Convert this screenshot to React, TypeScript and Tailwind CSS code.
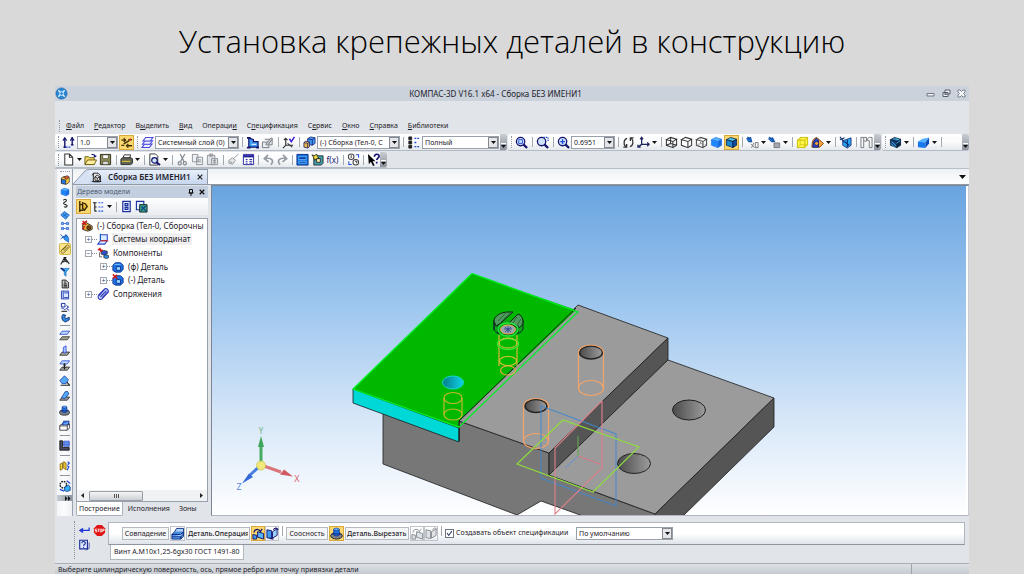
import type { ReactNode } from "react";

const NAVY = "#14146e";
const BLUE = "#1f4fd8";
const SKY = "#3f9cf0";

const cube = (top: string, left: string, right: string, edge: string) => (
  <g stroke={edge} strokeWidth=".8" strokeLinejoin="round">
    <path d="M1.500 4 6 1.500 12.500 3.500 8.500 6z" fill={top} />
    <path d="M1.500 4 8.500 6V12.500L1.500 10z" fill={left} />
    <path d="M8.500 6 12.500 3.500V10L8.500 12.500z" fill={right} />
  </g>
);

const magnifier = (inner: ReactNode) => (
  <g fill="none" stroke={NAVY} strokeWidth="1.400">
    <circle cx="6" cy="6" r="4.500" fill="#cfe2fb" />
    <path d="M9 9l4 4" strokeWidth="2.400" />
    {inner}
  </g>
);

const icons: Record<string, ReactNode> = {
  step: (
    <g fill="none" stroke={NAVY} strokeWidth="1.500">
      <path d="M3 3v10M11 1v9" />
      <path d="M1 5l2-3 2 3M9 5l2-3 2 3M1.500 12h3M9.500 9.500h3" strokeWidth="1.200" />
      <path d="M4 12h6" stroke={BLUE} strokeDasharray="2 1" />
    </g>
  ),
  snap: (
    <g fill="none" stroke="#3d2c00" strokeWidth="1.400">
      <path d="M1.500 4.500h4M9 4h4M1.500 10h3M8 10.500h5M4 8.500 10 5" />
      <path d="M4 2.500l2 2-2 2M9 8.500l-2 2 2 2" />
      <circle cx="11" cy="4" r="1.200" fill="#c22" stroke="none" />
    </g>
  ),
  layers: (
    <g fill="#eef1ff" stroke="#4b49e0" strokeWidth="1.100">
      <path d="M1 12.500l3-4h8l-3 4z" />
      <path d="M1.500 9l3-4h8l-3 4z" />
      <path d="M2 5.500l3-4h8l-3 4z" />
    </g>
  ),
  place: (
    <g>
      <path d="M3 2v10h10V6H8V4z" fill={SKY} stroke={NAVY} strokeWidth="1.300" />
      <path d="M1 2h4M1 12.500h4M11 12.500h3" stroke={NAVY} strokeWidth="2" />
      <path d="M6 9h5" stroke="#fff" />
    </g>
  ),
  editGray: (
    <g fill="#eceef0" stroke="#6f757c">
      <path d="M1.500 6.500h7v6h-7zM4 3.500h8v6H9" />
      <path d="M5 9l6-7 1.500 1L7 10z" fill="#cfd3d7" />
    </g>
  ),
  axesCheck: (
    <g fill="none" stroke="#333" strokeWidth="1.200">
      <path d="M4 3v7h8M4 10l-3 3M2 4.500l2-2 2 2M6 8l5 4" />
      <path d="M8 3l2 3 3.500-5" stroke="#3a1ed0" strokeWidth="1.600" />
    </g>
  ),
  parts: (
    <g stroke={NAVY} strokeWidth=".8">
      <path d="M5 3l3-2 5 1v6l-3 2-5-1z" fill={SKY} />
      <path d="M5 3l5 1 3-2M10 4v6" fill="none" />
      <path d="M1 7l2-1.500 4 1v5L5 13l-4-1z" fill="#e9b84a" />
      <path d="M1 7l4 1 2-1.500M5 8v5" fill="none" />
    </g>
  ),
  listTree: (
    <g stroke="#222" fill="none">
      <path d="M2 1h3v3H2zM2 5.500h3v3H2zM2 10h3v3H2z" fill="#222" />
      <path d="M8 2.500h5M8 7h3M8 11.500h5" stroke={BLUE} strokeDasharray="2 1" strokeWidth="1.400" />
    </g>
  ),
  zoomFit: magnifier(<path d="M4 4h4v4H4z" stroke={BLUE} strokeWidth="1" />),
  zoomBox: magnifier(<path d="M8 1.500h5v5" strokeDasharray="1.500 1" stroke={BLUE} />),
  zoomIn: magnifier(<path d="M3.500 6h5M6 3.500v5" stroke={BLUE} strokeWidth="1.400" />),
  rotate: (
    <g fill="none" stroke="#333" strokeWidth="1.400">
      <path d="M5.500 2.500C2 3 1 9 4 11.500M8.500 11.500C12 11 13 5 10 2.500" />
      <path d="M1.500 12h3.500V8.500M12.500 2H9v3.500" />
    </g>
  ),
  orient: (
    <g fill="none" stroke="#222a60" strokeWidth="1.400">
      <path d="M5 2v7h8M5 9l-4 3M3.500 3.500 5 1.500l1.500 2M11 7l2 2-2 2M1 9.500V12h3" />
    </g>
  ),
  wire: (
    <g fill="none" stroke="#333" strokeWidth="1.100">
      <path d="M1.500 4 6 1.500 12.500 3.500 8.500 6zM1.500 4v6l7 2.500V6M12.500 3.500V10l-4 2.500M6 1.500V8L1.500 10M6 8l6.500 2" />
    </g>
  ),
  wireHidden: (
    <g fill="#fff" stroke="#333" strokeWidth="1.100">
      <path d="M1.500 4 6 1.500 12.500 3.500 8.500 6zM1.500 4v6l7 2.500V6M12.500 3.500V10l-4 2.500" />
    </g>
  ),
  wireThin: (
    <g fill="none" stroke="#444" strokeWidth="1.100">
      <path d="M1.500 4 6 1.500 12.500 3.500 8.500 6zM1.500 4v6l7 2.500V6M12.500 3.500V10l-4 2.500" />
      <path d="M6 1.500V8L1.500 10M6 8l6.500 2" strokeDasharray="1.500 1" stroke="#888" />
    </g>
  ),
  shaded: cube("#4fb4ff", "#1b87fb", "#1268dc", "#2f7bea"),
  shadedEdges: cube("#48c0e8", "#1b87d0", "#0c4da2", "#0a1840"),
  hideAxes: (
    <g stroke="#1556a8" fill="#2f8ae0" strokeWidth="1.200">
      <path d="M1.500 1l5 5M1 3l4-1.500L6 6 3 6z" />
      <path d="M6 12.500l2.500-5M5.500 8.500l3.500 4M10 7h3v5.500h-3z" stroke="#777" fill="none" strokeWidth="1" />
    </g>
  ),
  hideBody: (
    <g stroke="#1556a8" fill="#2f8ae0" strokeWidth="1.200">
      <path d="M1 1l6 5M1 3l4-1 2 4-3 0z" />
      <path d="M6.500 7.500h6v5h-6z" fill="#a3a7b2" stroke="#777" strokeWidth="1" />
    </g>
  ),
  yellowCube: (
    <g stroke="#c9bb00" strokeLinejoin="round">
      <path d="M1.500 4.500 4.500 1.500h8v8l-3 3h-8z" fill="#fdf64c" />
      <path d="M1.500 4.500h8l3-3M9.500 4.500v8" fill="none" />
      <path d="M4.500 2v7.500h8M4.500 9.500l-3 3" fill="none" strokeWidth=".7" />
    </g>
  ),
  section: (
    <g strokeWidth=".9">
      <path d="M1 12c0-6 1-9 5-10.500L9 4l4.500 4-4 4z" fill="#f2a541" stroke="#7a4100" />
      <path d="M2 12c0-5 1-8 4-9.500l2 2v7.500z" fill="#2452d8" stroke={NAVY} />
      <circle cx="6" cy="8" r="2.200" fill="#f2a541" stroke={NAVY} />
    </g>
  ),
  camera: (
    <g stroke={NAVY} strokeWidth=".8">
      <path d="M4 5l3-1 6-2v8l-4 3-5-3z" fill="#28a5f0" />
      <path d="M1 1l5 6M1 4l5-2M6 6l5 4M9 4v8" fill="none" stroke="#0b2c6a" strokeWidth="1.200" />
    </g>
  ),
  grayPair: (
    <g fill="#f6f6f6" stroke="#74797f">
      <path d="M1 1.500h6v4H4v7H1zM4 5.500V2" />
      <path d="M8 3l2-1.500h3v11h-3V5H8z" />
    </g>
  ),
  darkCube: (
    <g>
      {cube("#2f78a8", "#143d78", "#0a2550", "#04142e")}
      <path d="M3 6l5 5M2 8l4 4M8 8l4-3M7 3l4 1" stroke="#47c4e8" />
    </g>
  ),
  wedge: (
    <g>
      <path d="M1 6l5-3 7-1.500L9 7z" fill="#56b4ff" />
      <path d="M1 6l8 1v6L1 12z" fill="#1679ee" />
      <path d="M9 7 13 1.500V8l-4 5z" fill="#0d4fc0" />
    </g>
  ),
  newDoc: <path d="M3 1h5l3.500 3.500V13H3zM8 1v3.500h3.500" fill="#fff" stroke="#333" strokeWidth="1.100" />,
  open: (
    <g stroke="#5b4a00" strokeWidth=".9">
      <path d="M1 4h4l1 1h5v7H1z" fill="#f3d867" />
      <path d="M1 12.500l3-5h9.500l-2.500 5z" fill="#ffee9b" />
      <path d="M8 2c2-1 4 0 4 2l1.300-1M12 4l-1.500-.8" fill="none" stroke={NAVY} strokeWidth="1.200" />
    </g>
  ),
  save: (
    <g stroke="#2b2b1a">
      <path d="M1.500 1.500h11v11h-11z" fill="#8d8c55" />
      <path d="M4 2h6v4H4z" fill="#fff" strokeWidth=".6" />
      <path d="M4 9h6v3.500H4z" fill="#ddd" strokeWidth=".6" />
    </g>
  ),
  print: (
    <g stroke="#2c2c2c">
      <path d="M4.500 2h7l-1.500 4H3z" fill="#fff" />
      <path d="M1 6.500l2-1.500h9l1.500 1.500V11l-2 1.500H1z" fill="#5f6458" />
      <path d="M2 9h9" stroke="#e2c72c" strokeWidth="1.200" />
    </g>
  ),
  preview: (
    <g>
      <path d="M2 1h6l2.500 2.500V13H2z" fill="#fff" stroke="#333" />
      <circle cx="7" cy="8" r="3" fill="#cfe4ff" stroke={NAVY} strokeWidth="1.300" />
      <path d="M9 10l4 3" stroke={NAVY} strokeWidth="2" />
    </g>
  ),
  cut: (
    <g fill="none" stroke="#858a92" strokeWidth="1.300">
      <path d="M4.500 1l4 8M9.500 1 5 9" />
      <circle cx="4" cy="11" r="1.700" />
      <circle cx="9.500" cy="11" r="1.700" />
    </g>
  ),
  copy: <path d="M1.500 1.500h6v8h-6zM6 4.500h6.500v8H6zM7.500 7.500h3.500M7.500 9.500h3.500" fill="#eef0f2" stroke="#8d9298" />,
  paste: <path d="M1.500 2.500h8v10h-8zM4 1h3v2.500H4zM6 6h6.500v6.500H6zM7.500 8h3M7.500 10h3" fill="#e0e3e6" stroke="#8d9298" />,
  brush: <path d="M2 8l4-3 3 3-3 4-4-1zM7 6l5.500-5M3 9l3 2" fill="#e3e5e8" stroke="#93989e" />,
  table: (
    <g fill="#fff" stroke="#24249a">
      <path d="M1.500 1.500h11v11h-11z" />
      <path d="M1.500 3.500h11" strokeWidth="2.500" />
      <path d="M4 7h2M4 9h2M4 11h2M8 7h3M8 9h3M8 11h3" />
    </g>
  ),
  undo: <path d="M9.500 12.500c4-4 1-8-6.500-6.500M6.500 2 2.500 6l4.500 3.500" fill="none" stroke="#959aa3" strokeWidth="1.800" />,
  redo: <path d="M4.500 12.500c-4-4-1-8 6.500-6.500M7.500 2l4 4L7 9.500" fill="none" stroke="#959aa3" strokeWidth="1.800" />,
  window: (
    <g>
      <path d="M1 1.500h12v11.500H1z" fill="#1477e8" stroke="#0a2a80" />
      <path d="M3 4h8v3H3zM3 9h8v2H3z" fill="#0b3fae" stroke="#7fd0ff" strokeWidth=".7" />
    </g>
  ),
  libs: (
    <g stroke="#222" strokeWidth=".9">
      <path d="M3 3h10v8l-2 2H3z" fill="#3f9fae" />
      <path d="M6 6h4v4H6z" fill="#fff3ae" />
      <path d="M1 2l3 1 2-2 1 3 2 2-3 0-2 2-1-3z" fill="#f7e03c" />
    </g>
  ),
  compare: (
    <g fill="#fff" stroke="#444" strokeWidth="1.100">
      <circle cx="4.500" cy="4" r="3" />
      <circle cx="9.500" cy="10" r="3" />
      <path d="M9.500 2h3v3M5 12.500H2V9" stroke={BLUE} fill="none" />
      <path d="M4.500 2.500v3M8.500 9h2v2" fill="none" />
    </g>
  ),
  help: (
    <g>
      <path d="M1 1l1 11 2.200-2.500L6.500 14l1.700-.8L6 9h3z" fill="#000" />
      <path d="M8 4c0-3.500 5-3.500 5-.5 0 2-2.500 2-2.500 4M10.500 9.500v1.800" fill="none" stroke={NAVY} strokeWidth="1.800" />
    </g>
  ),
  assembly: (
    <g strokeWidth=".9" stroke="#222">
      <path d="M2 4l4-2 7 2v6l-4 3-7-2z" fill="#f5c542" />
      <path d="M2 6l6 1v6l-6-1z" fill="#2676e6" />
      <path d="M5 3l5-2 3 2-4 3z" fill="#e35a28" />
    </g>
  ),
  spline: <path d="M5 3.500C5 1 9 1 9 3.500S5 5 5 7.500s5 1 5 3.500-3 2-4.500 1" fill="none" stroke="#222" strokeWidth="1.500" />,
  surface: <path d="M1 7l5-5 7 5-5 6zM4 5l6 5M10 5 4 9" fill="#3f9cf0" stroke="#1b58b0" />,
  array: (
    <path d="M2 2h3v3H2zM9 2h3v3H9zM2 9h3v3H2zM9 9h3v3H9zM5 3.500h4M5 10.500h4" fill="#7fb6fa" stroke="#2f62cc" strokeWidth="1.100" />
  ),
  pin: (
    <g stroke="#1a58b8" fill="#3296ec">
      <path d="M5 5l5-1 2 3v6L6 9z" />
      <path d="M1 2l5 5M1 8l8-5M7 2l4 3" strokeWidth="1.400" />
    </g>
  ),
  clip: (
    <g fill="none" stroke="#6d5610" strokeWidth="1.200">
      <path d="M2 9l7-7c2-2 5 1 3.500 3L6 12c-2 2-6 0-4-3l6-5.500M5 10l6-6M3.500 8.500 9 3" />
    </g>
  ),
  clipBlue: (
    <g fill="#cfd9ff" stroke="#2b36b8" strokeWidth="1.300">
      <path d="M2 8l7-7c2.500-1 5 1 4 4L6 12.500c-2.500 2-6 0-4-4.500z" />
      <path d="M4 10.500l7-7.500M6 11.500 12.500 4.500M2.500 9l6-7" />
    </g>
  ),
  measure: <path d="M1 12l5-9h1l6 8M2.500 8c4 1 4.500-1 4.500-5M11.500 8c-4 1-4.500-1-4.500-5M5 2h4" fill="none" stroke="#222" strokeWidth="1.500" />,
  filter: (
    <g>
      <path d="M1 2h12L8.500 7v6L6 11V7z" fill="#35b2f5" stroke="#1c5fb3" strokeWidth=".9" />
      <path d="M1 1.500l6 4" stroke={NAVY} strokeWidth="1.600" />
    </g>
  ),
  report: <path d="M3 1.500h5l4 3.500v7.500H3zM5 7h5M5 9h5M5 11h5M7 2v5" fill="#d0d0d0" stroke="#222" strokeWidth="1.300" />,
  tabDoc: (
    <g stroke="#222" fill="none" strokeWidth="1.200">
      <path d="M3 1.500h6l3 3v8H3z" fill="#eee" />
      <path d="M5 6l3-2 3 2v4l-3 2-3-2zM5 6l3 2 3-2M8 8v4M1 4l3-2M1 12h12" />
    </g>
  ),
  spec: (
    <g fill="#dcebff" stroke="#213bb0" strokeWidth="1.300">
      <path d="M2 1.500h10v11H2zM4.500 2v10M6 4h5M6 10.500h5" />
    </g>
  ),
  coord: (
    <g fill="none" stroke="#1e37a8" strokeWidth="1.400">
      <path d="M2 2h5v5H2zM2 9c3-2 3 3 6 1M9 5l3 2-3 2 4 3" />
      <path d="M2 13h8" stroke="#111" />
    </g>
  ),
  sheet: <path d="M4 2C1 6 3 12 8 12.500l5-3V6L8 8C6 7 7 4 8 3z" fill="#2e86dd" stroke="#132a66" strokeWidth="1.200" />,
  planeTop: (
    <g stroke="#1f3fc4">
      <path d="M4 1.500h9.500l-3 4H1z" fill="#bcd9ff" />
      <path d="M4 8.500h9.500l-3 4H1z" fill="#9d9d85" stroke="#333" />
    </g>
  ),
  planeAng: (
    <g>
      <path d="M1 13l3-4h9.500l-3 4z" fill="#a7a798" stroke="#222" />
      <path d="M5.500 10V3l3.500-2v9z" fill="#a5c8ff" stroke="#2a3fd0" />
    </g>
  ),
  planeMid: (
    <g>
      <path d="M4 1h9.500l-3 4H1z" fill="#bcd9ff" stroke="#2447d8" />
      <path d="M1 13l3-4h9.500l-3 4z" fill="#aaa" stroke="#222" />
      <path d="M7 4v8M5 6.500h4M5 10h4" stroke="#222" strokeWidth="1.300" />
    </g>
  ),
  planeRot: (
    <g>
      <path d="M1 7l6-6 5 5-3 5-5 0z" fill="#54a9f5" stroke="#1c3c9c" />
      <path d="M2 13h11.500L10 9" fill="none" stroke="#222" strokeWidth="1.400" />
    </g>
  ),
  planeCurve: (
    <g>
      <path d="M1 13l3-4h9.500l-3 4z" fill="#999" stroke="#222" />
      <path d="M3 10l5-8h3l1.500 3-5 6z" fill="#54a9f5" stroke="#1c3c9c" />
    </g>
  ),
  cylinder: (
    <g>
      <ellipse cx="7" cy="9.500" rx="6.300" ry="3.500" fill="#7c7f88" stroke="#222" />
      <path d="M4 2.500v6c1.500 1.500 4.500 1.500 6 0v-6z" fill="#1e6fe0" stroke="#0d2a80" strokeWidth=".8" />
      <ellipse cx="7" cy="2.500" rx="3" ry="1.300" fill="#63b0ff" stroke="#0d2a80" strokeWidth=".6" />
      <path d="M2 7.500h10" stroke="#0d2a80" />
    </g>
  ),
  box: (
    <g stroke="#222">
      <path d="M1 7l3-2h9.500v5l-3 3H1zM1 7.500h9.500l3-2.500M10.500 7.500V13" fill="#fff" />
      <path d="M4 6l2-4.500h7L11.500 6z" fill="#2a77ea" stroke="#0d2a80" />
      <path d="M6 5h4l1-2.500" fill="none" stroke="#a8d2ff" />
    </g>
  ),
  slab: (
    <g stroke="#0d2a80">
      <path d="M1 8l3-3h9.500L10.500 8zM1 8h9.500v5H1zM10.500 8l3-3v5l-3 3z" fill="#4f9cf2" />
      <path d="M4 5l2-3.500h7.500V5M1 10.500h9.500l3-3" fill="#a9d2fb" />
    </g>
  ),
  bracket: (
    <g>
      <path d="M1 1h3.500v8.500H13V13H1z" fill="#454a5c" stroke="#111" />
      <path d="M6 1.500h7V8H6zM6 3.700h7M6 6h7" fill="#8fc2ff" stroke="#1f3fc4" />
    </g>
  ),
  springs: (
    <g fill="#f4d03c" stroke="#7a5c00">
      <path d="M1.500 5l3-1.500v8L1.500 13zM6 2l3 2v8.500l-3-2z" />
      <path d="M11 2l2 2-2 2M10.500 7.500l2 1-2 4.500" stroke="#2447d8" fill="none" strokeWidth="1.500" />
    </g>
  ),
  gears: (
    <g>
      <circle cx="5" cy="5.500" r="3.800" fill="none" stroke="#222" strokeWidth="1.600" strokeDasharray="2 1" />
      <path d="M7 8l4-2 2 2v4l-4 1.500-3-1.500z" fill="#35b2f5" stroke="#143c8a" />
      <path d="M9 1l4 3M1 11l5 2" stroke="#2447d8" strokeWidth="1.500" />
    </g>
  ),
  treeView: (
    <g fill="none" stroke="#3b2b00" strokeWidth="1.500">
      <path d="M3 1v12M3 5h3M3 11h4" />
      <path d="M6 3l3 1 2 3-3 4-2-2z" fill="#f1b93a" />
    </g>
  ),
  bullets: (
    <g stroke="#222" strokeWidth="1.200" fill="none">
      <path d="M1 3h4M3 3v9M3 7.500h2M3 12h2" />
      <path d="M7 3h6M7 7.500h6M7 12h6" stroke={BLUE} strokeDasharray="2 1" />
    </g>
  ),
  docBlue: <path d="M3 1.500h8v11H3zM5.500 4h3v2h-3zM5.500 8h3v2h-3z" fill="#e5efff" stroke="#1d2f9b" strokeWidth="1.300" />,
  docGreen: (
    <g>
      <path d="M1.500 1.500h8v9h-8z" fill="#e5efff" stroke="#1d2f9b" strokeWidth="1.200" />
      <path d="M5 5h8v8H5z" fill="#3fa57c" stroke="#123" />
      <path d="M7 7l5 5M11.500 6.500l-5 5" stroke="#0d3f9a" strokeWidth="1.300" />
    </g>
  ),
  assemblyRed: (
    <g>
      <path d="M2 6l4-3 7 4v4l-5 2-6-2z" fill="#e4ae3c" stroke="#222" />
      <circle cx="9" cy="9" r="2.300" fill="#7d3d10" stroke="#222" />
      <path d="M2 1l4 5M1 5l6-4M4 7l-2 4" stroke="#d01818" strokeWidth="1.700" />
    </g>
  ),
  axesBox: (
    <g fill="none" stroke="#2c49c9" strokeWidth="1.300">
      <path d="M4 2h8v7H4zM4 9l-3 4h8l3-4" fill="#d9ecff" />
      <path d="M4 1v8" stroke="#1a5fc0" />
      <path d="M4 9h9" stroke="#c22" />
    </g>
  ),
  components: (
    <g stroke="#222" strokeWidth=".8">
      <path d="M1 3l6 1M3 1l2 5" stroke="#d01818" strokeWidth="1.800" />
      <path d="M5 6l3-2 4 1v3L9 9.500 5 8.500z" fill="#2e50d2" />
      <path d="M8 10l2-1 3.500 1v2.500l-2 1-3.500-1z" fill="#2e8fe8" />
      <path d="M3 6v5.500h3" fill="none" />
    </g>
  ),
  part: (
    <g stroke="#0d2a80">
      <path d="M1 5l3-3h6l3 3v5l-3 3H4l-3-2z" fill="#1b74e8" />
      <path d="M5 6.500h5v4.500H5z" fill="#8fd0ff" />
      <path d="M3 4h7" stroke="#7cc6ff" />
    </g>
  ),
  partRed: (
    <g stroke="#0d2a80">
      <path d="M1 5l3-3h6l3 3v5l-3 3H4l-3-2z" fill="#1b74e8" />
      <path d="M5 6.500h5v4.500H5z" fill="#8fd0ff" />
      <path d="M1 .5l5 5M1 5l5-4" stroke="#d01818" strokeWidth="1.800" />
    </g>
  ),
  enter: (
    <g fill="#1d36d8" stroke="#1d36d8">
      <path d="M13 4v3.500H4" fill="none" strokeWidth="1.500" />
      <path d="M5.500 5 1.500 7.500l4 2.500z" />
    </g>
  ),
  stop: (
    <g>
      <path d="M4.500 1h5L13 4.500v5L9.500 13h-5L1 9.500v-5z" fill="#e01414" />
      <path d="M4.300 5.500h-2V7h2v1.500h-2M5 5.500h2M6 5.500v3M7.800 5.500h1.500v3H7.800zM10.500 8.500v-3H12V7h-1.500" fill="none" stroke="#fff" strokeWidth=".8" />
    </g>
  ),
  ask: (
    <g fill="#dfe8ff" stroke="#1b2a96" strokeWidth="1.300">
      <path d="M2 1.500h9v10H2z" />
      <path d="M4.500 5c0-3 4.500-2.500 4 0-.3 1.500-2 1.300-2 3M6.500 9v1.200" fill="none" />
      <path d="M9 13l4-2V4" fill="none" strokeWidth=".8" />
    </g>
  ),
  flip: (
    <g stroke={NAVY}>
      <path d="M1 8l4 1v4H1z" fill="#3f9cf0" />
      <path d="M6 5l6.500 2v6L6 11z" fill="#55b3ff" />
      <path d="M2 6c1-5 6-4 7-1l2-3" fill="none" strokeWidth="1.300" />
    </g>
  ),
  flip2: (
    <g stroke={NAVY}>
      <path d="M1 3l5 1v8.500l-5-1z" fill="#3f9cf0" />
      <path d="M7 5l5-3v7l-5 3z" fill="#9cd0ff" />
      <path d="M8 3c2-3 4-2 5 0M4 12l4 1" fill="none" strokeWidth="1.300" />
    </g>
  ),
  flipGray: (
    <g stroke="#858a91" fill="#dfe2e5">
      <path d="M1 8l4 1v4H1zM6 5l6.500 2v6L6 11z" />
      <path d="M2 6c1-5 6-4 7-1l2-3" fill="none" />
    </g>
  ),
  flip2Gray: (
    <g stroke="#858a91" fill="#dfe2e5">
      <path d="M1 3l5 1v8.500l-5-1zM7 5l5-3v7l-5 3z" />
      <path d="M8 3c2-3 4-2 5 0" fill="none" />
    </g>
  ),
};

function Glyph({ name, className = "size-[13px]" }: { name: string; className?: string }) {
  return (
    <svg viewBox="0 0 14 14" className={`shrink-0 ${className}`} aria-hidden="true">
      {icons[name]}
    </svg>
  );
}

function Tool({ name, active, tight, framed }: { name: string; active?: boolean; tight?: boolean; framed?: boolean }) {
  return (
    <button
      type="button"
      aria-label={name}
      className={`flex h-[15px] shrink-0 items-center justify-center ${tight ? "w-[14px]" : "w-[15px]"} ${
        active ? "border border-[#d9a93c] bg-[#fbd970]" : ""
      } ${framed ? "border border-[#c0c5cb]" : ""}`}
    >
      {name === "fx" ? (
        <span className="text-[8px] leading-none text-[#14146e]">f(x)</span>
      ) : (
        <Glyph name={name} />
      )}
    </button>
  );
}

const Sep = () => (
  <span className="flex w-[6px] shrink-0 justify-center">
    <span className="h-[10px] w-px bg-[#a3a9b1]" />
  </span>
);

const Grip = () => (
  <span className="flex w-[6px] shrink-0 justify-center">
    <span className="h-[12px] border-l border-dotted border-[#9299a2]" />
  </span>
);

const Drop = () => (
  <button type="button" aria-label="Список" className="flex w-[7px] shrink-0 items-center justify-center">
    <svg viewBox="0 0 5 3" className="h-[3px] w-[5px]">
      <path d="M0 0h5L2.500 3z" fill="#111" />
    </svg>
  </button>
);

const More = () => (
  <button
    type="button"
    aria-label="Ещё"
    className="flex w-[7px] shrink-0 flex-col items-center justify-end self-stretch rounded-r-[2px] bg-linear-to-b from-[#c9cdd3] to-[#8d949e] pb-[2px]"
  >
    <svg viewBox="0 0 5 5" className="size-[5px]">
      <path d="M0 .5h5" stroke="#fff" />
      <path d="M0 2h5L2.500 5z" fill="#111" />
    </svg>
  </button>
);

function Combo({ label, value, className }: { label: string; value: string; className: string }) {
  return (
    <span className={`flex h-[13px] shrink-0 items-stretch border border-[#9aa1ab] bg-white ${className}`}>
      <select aria-label={label} className="min-w-0 flex-1 appearance-none overflow-hidden pl-[2px] text-[7px] leading-[11px] outline-none">
        <option>{value}</option>
      </select>
      <span className="flex w-[10px] shrink-0 items-center justify-center border border-[#85898f] bg-[#e4e6e9]">
        <svg viewBox="0 0 5 3" className="h-[3px] w-[5px]">
          <path d="M0 0h5L2.500 3z" fill="#111" />
        </svg>
      </span>
    </span>
  );
}

const bar = "flex items-center rounded-[2px] border-b border-[#b4bac3] bg-linear-to-b from-white via-[#fafbfc] to-[#e6e9ed]";

const menus = [
  ["", "Ф", "айл"],
  ["", "Р", "едактор"],
  ["В", "ы", "делить"],
  ["", "В", "ид"],
  ["Операци", "и", ""],
  ["С", "п", "ецификация"],
  ["С", "е", "рвис"],
  ["", "О", "кно"],
  ["", "С", "правка"],
  ["", "Б", "иблиотеки"],
];

const tree = [
  { text: "Системы координат", icon: "axesBox", mark: "+", depth: 0, lit: true },
  { text: "Компоненты", icon: "components", mark: "−", depth: 0 },
  { text: "(ф) Деталь", icon: "part", mark: "+", depth: 1 },
  { text: "(-) Деталь", icon: "partRed", mark: "+", depth: 1 },
  { text: "Сопряжения", icon: "clipBlue", mark: "+", depth: 0 },
];

const stripTop = ["assembly", "shaded", "spline", "surface", "array", "pin", "clip", "measure", "filter", "report", "spec", "coord", "sheet"];
const stripMid = ["planeTop", "planeAng", "planeMid", "planeRot", "planeCurve", "cylinder", "box"];

const StripSep = () => <span className="h-px w-[10px] bg-[#8d949c]" />;

function Scene() {
  return (
    <svg viewBox="212 186 754 329" preserveAspectRatio="xMinYMin slice" className="block h-full w-full" role="img" aria-label="3D">
      <defs>
        <linearGradient id="sky" x1="0" y1="0" x2="0" y2="1">
          <stop offset="0" stopColor="#69a4e0" />
          <stop offset=".35" stopColor="#9cc5ee" />
          <stop offset=".7" stopColor="#d5e6f8" />
          <stop offset="1" stopColor="#ffffff" />
        </linearGradient>
        <linearGradient id="bore" x1="0" x2="1">
          <stop offset="0" stopColor="#4a4a4a" />
          <stop offset="1" stopColor="#9c9c9c" />
        </linearGradient>
        <linearGradient id="cyanBore" x1="0" x2="1">
          <stop offset="0" stopColor="#067c8c" />
          <stop offset="1" stopColor="#10d2e6" />
        </linearGradient>
      </defs>
      <rect x="212" y="186" width="754" height="329" fill="url(#sky)" />

      <g stroke="#1c1c1c" strokeWidth=".8" strokeLinejoin="round">
        <path d="M383 413 459 441V421L549 453V475L655 514V516H583L541 501 517 515 383 464z" fill="#777" />
        <path d="M578 305 668 338 549 453 459 421z" fill="#9b9b9b" />
        <path d="M668 338V360L549 475V453z" fill="#555" />
        <path d="M668 360 774 398 655 514 549 475z" fill="#9b9b9b" />
        <path d="M774 398V427L681 518H651z" fill="#555" />
        <path d="M353 389 459 428V442L353 403z" fill="#00d8d8" />
      </g>
      <path d="M353 389 472 273.500 576 310 459 421V428z" fill="#00b800" />
      <path d="M459 441V421L576 308" fill="none" stroke="#111" strokeWidth=".9" />
      <path d="M353 389 472 273.500 578 312 459 427z" fill="none" stroke="#00f028" strokeWidth="1.300" />

      <g stroke="#222" fill="url(#bore)">
        <ellipse cx="689" cy="410" rx="16.500" ry="10" />
        <ellipse cx="634" cy="463.500" rx="16.500" ry="10" />
        <ellipse cx="591" cy="352.500" rx="11.500" ry="6.500" strokeWidth="1.500" />
        <ellipse cx="536" cy="406" rx="11" ry="6.500" strokeWidth="1.500" />
      </g>
      <ellipse cx="453" cy="382.500" rx="10.500" ry="6.500" fill="url(#cyanBore)" stroke="#12d8cc" />

      <g fill="none" stroke="#f2a469" strokeWidth="1.200">
        <path d="M578.500 352.500V388M603.500 352.500V388M523.500 406V441M548.500 406V441" />
        <path d="M578.500 352.500a12.500 7.500 0 0 1 25 0M523.500 406a12.500 7.500 0 0 1 25 0" />
        <ellipse cx="591" cy="388" rx="12.500" ry="7.500" />
        <ellipse cx="536" cy="441" rx="12.500" ry="7.500" />
      </g>
      <g fill="none" stroke="#c3b82c" strokeWidth="1.200">
        <ellipse cx="453" cy="398" rx="9" ry="5.500" />
        <ellipse cx="453" cy="414.500" rx="9" ry="5.500" />
        <path d="M444 398v16.500M462 398v16.500" />
      </g>

      <g fill="none">
        <path d="M494 320v9c1 8 27 8 29 0v-9" fill="#0c9c20" fillOpacity=".6" stroke="#123" />
        <path d="M494 321c0-5 7-9 14-9h5l-12 11-5 3zM509 323l9-9c3 1 5 4 5 7 0 4-2 6-5 7z" fill="#4f9a5e" stroke="#0b2410" />
        <path d="M498 321l8-8M501 322l9-9M517 317l-5 7M521 319l-4 6" stroke="#1f5a2a" strokeWidth=".7" />
        <path d="M494 322v8M498 325v9M518 325v8" stroke="#123" />
        <ellipse cx="508" cy="329.500" rx="10" ry="6.500" stroke="#22e83a" strokeWidth="1.300" />
        <ellipse cx="508" cy="329.500" rx="7.500" ry="4.500" fill="#9aa6af" stroke="#f0a050" />
        <path d="M504 329h8M508 326v7M505 327l6 5M511 327l-6 5" stroke="#263a8a" strokeWidth=".8" />
        <path d="M499 335v31M517 335v31" stroke="#e0b040" strokeWidth="1.200" />
        <ellipse cx="508" cy="344" rx="10.500" ry="5.500" stroke="#38e83a" strokeWidth="1.300" />
        <ellipse cx="508" cy="343" rx="9" ry="5" stroke="#d9c030" />
        <ellipse cx="508" cy="361" rx="8.500" ry="4.500" stroke="#d9c030" strokeWidth="1.200" />
        <ellipse cx="508" cy="370.500" rx="7.500" ry="4.500" stroke="#e0a840" strokeWidth="1.200" />
      </g>

      <g fill="none" strokeWidth="1.100">
        <path d="M541 406 616 434V506L541 478z" stroke="#3e88d0" strokeOpacity=".85" />
        <path d="M602 401V468L555 514V448z" stroke="#e07f8c" />
        <path d="M517 464 563 420 639 447 593 492z" stroke="#8fdc3c" />
        <path d="M578 436v20" stroke="#62a852" />
        <path d="M578 456l22 8" stroke="#d87884" />
        <path d="M578 456l-13 12" stroke="#7796c0" />
      </g>

      <g strokeWidth="3">
        <path d="M261 462V446" stroke="#45ab60" />
        <path d="M261 465l20 7" stroke="#d9757b" />
        <path d="M261 465l-11 10" stroke="#4a7fe0" />
      </g>
      <path d="M258 447l3-11 3 11z" fill="#3fa55b" />
      <path d="M280 474.500l13 2-9-7z" fill="#cf5a62" />
      <path d="M253 477l-11 6.500 7-10z" fill="#3568d6" />
      <circle cx="261" cy="465.500" r="4.500" fill="#f2e97c" stroke="#c4b944" strokeWidth=".6" />
      <g fontSize="9" fontFamily="Noto Sans, sans-serif" textAnchor="middle">
        <text x="261" y="434" fontSize="8" fill="#6ab483">Y</text>
        <text x="297" y="482" fill="#d86670">X</text>
        <text x="239" y="490" fill="#5b87e0">Z</text>
      </g>
    </svg>
  );
}

export default function App() {
  return (
    <div className="flex h-screen flex-col overflow-hidden bg-[#d9d9d9] font-['Noto_Sans',sans-serif] text-[7px] text-[#1e222a]">
      <h1 className="flex h-[86px] shrink-0 items-center justify-center pb-[4px] whitespace-nowrap font-['Open_Sans',sans-serif] text-[31px] font-light leading-[40px] text-black">
        Установка крепежных деталей в конструкцию
      </h1>

      <div className="mx-[55px] flex min-h-0 flex-1 flex-col bg-[#e1e5e9]">
        <header className="flex h-[15px] shrink-0 items-center bg-[#cbd2dc]">
          <svg viewBox="0 0 14 14" className="size-[13px] shrink-0" aria-hidden="true">
            <circle cx="7" cy="7" r="6" fill="#2a86d4" stroke="#1c62a4" strokeWidth=".7" />
            <path d="M3.500 3.500l7 7M10.500 3.500l-7 7" stroke="#d8efff" strokeWidth="1.500" />
            <circle cx="7" cy="7" r="2" fill="#2a86d4" stroke="#d8efff" />
          </svg>
          <span className="flex-1 text-center text-[8px] leading-[15px]">КОМПАС-3D V16.1 x64 - Сборка БЕЗ ИМЕНИ1</span>
          <button type="button" aria-label="Свернуть" className="flex w-[15px] justify-center">
            <svg viewBox="0 0 9 9" className="size-[9px]"><path d="M1 4.500h7v2.500H1z" fill="#f4f6f8" stroke="#6f7784" /></svg>
          </button>
          <button type="button" aria-label="Развернуть" className="flex w-[16px] justify-center">
            <svg viewBox="0 0 9 9" className="size-[9px]"><path d="M3 1h5v4H3zM1 3.500h5v4H1zM2.500 5.500h2" fill="#f4f6f8" stroke="#555c68" /></svg>
          </button>
          <button type="button" aria-label="Закрыть" className="flex w-[15px] justify-center">
            <svg viewBox="0 0 9 9" className="size-[9px]"><path d="M1 1h2l1.500 1.500L6 1h2v2L6.500 4.500 8 6v2H6L4.500 6.500 3 8H1V6l1.500-1.500L1 3z" fill="#f4f6f8" stroke="#6f7784" strokeWidth=".9" /></svg>
          </button>
        </header>

        <nav className="flex h-[33px] shrink-0 items-end pb-[2px] pl-[1px] whitespace-nowrap">
          <Grip />
          <div className="flex gap-[10px] pl-[4px] leading-[12px]">
            {menus.map(([a, u, b]) => (
              <button type="button" key={a + u + b}>
                {a}<u>{u}</u>{b}
              </button>
            ))}
          </div>
        </nav>

        <div className="flex h-[17px] shrink-0 gap-px">
          <div className={bar}>
            <Grip />
            <Tool name="step" />
            <Combo label="Шаг курсора" value="1.0" className="mx-px w-[41px]" />
            <Tool name="snap" active />
            <Grip />
            <Tool name="layers" />
            <Combo label="Слой" value="Системный слой (0)" className="w-[84px]" />
            <Sep />
            <Tool name="place" />
            <Tool name="editGray" />
            <Sep />
            <Tool name="axesCheck" />
            <Sep />
            <Tool name="parts" />
            <Combo label="Компонент" value="(-) Сборка (Тел-0, С" className="w-[83px]" />
            <Sep />
            <Tool name="listTree" />
            <Combo label="Вид дерева" value="Полный" className="mx-px w-[77px]" />
            <More />
          </div>
          <div className={bar}>
            <Grip />
            <Tool name="zoomFit" />
            <Sep />
            <Tool name="zoomBox" />
            <Sep />
            <Tool name="zoomIn" />
            <Combo label="Масштаб" value="0.6951" className="w-[44px]" />
            <Sep />
            <Tool name="rotate" />
            <Tool name="orient" />
            <Drop />
            <Sep />
            <Tool name="wire" />
            <Tool name="wireHidden" />
            <Tool name="wireThin" />
            <Tool name="shaded" />
            <Tool name="shadedEdges" active />
            <Sep />
            <Tool name="hideAxes" />
            <Drop />
            <Tool name="hideBody" />
            <Drop />
            <Sep />
            <Tool name="yellowCube" />
            <Tool name="section" />
            <Drop />
            <Sep />
            <Tool name="camera" />
            <Sep />
            <Tool name="grayPair" />
            <More />
          </div>
          <div className={`${bar} flex-1`}>
            <Grip />
            <Tool name="darkCube" />
            <Drop />
            <Sep />
            <Tool name="wedge" />
            <Drop />
            <Sep />
            <span className="flex-1" />
            <More />
          </div>
        </div>

        <div className="flex h-[18px] shrink-0 border-b border-[#b9bfc7] pt-px">
          <div className={bar}>
            <Grip />
            <Tool name="newDoc" />
            <Drop />
            <Tool name="open" />
            <Tool name="save" />
            <Sep />
            <Tool name="print" />
            <Drop />
            <Sep />
            <Tool name="preview" />
            <Drop />
            <Sep />
            <Tool name="cut" />
            <Tool name="copy" />
            <Tool name="paste" />
            <Sep />
            <Tool name="brush" />
            <Tool name="table" tight />
            <Sep />
            <Tool name="undo" tight />
            <Tool name="redo" tight />
            <Sep />
            <Tool name="window" />
            <Tool name="libs" />
            <Tool name="fx" />
            <Sep />
            <Tool name="compare" tight />
            <Sep />
            <Tool name="help" tight />
            <More />
          </div>
        </div>

        <div className="flex min-h-0 flex-1">
          <aside className="ml-[2px] flex w-[15px] shrink-0 flex-col items-center bg-linear-to-r from-[#f3f5f7] via-[#fbfcfd] to-[#eef0f3] pt-[2px]">
            <span className="w-[10px] border-t border-dotted border-[#9299a2]" />
            <div className="flex h-[151px] shrink-0 flex-col items-center justify-between pt-[3px]">
              {stripTop.map((n) => (
                <button
                  type="button"
                  key={n}
                  aria-label={n}
                  className={n === "clip" ? "rounded-[1px] bg-[#f8e58a] outline outline-[#d9b84c]" : ""}
                >
                  <Glyph name={n} className="block size-[10px]" />
                </button>
              ))}
            </div>
            <div className="flex flex-col items-center gap-[4px] pt-[2px]">
              <StripSep />
              {stripMid.map((n) => (
                <button type="button" key={n} aria-label={n}>
                  <Glyph name={n} className="block size-[11px]" />
                </button>
              ))}
              <StripSep />
              <Glyph name="bracket" className="size-[11px]" />
              <StripSep />
              <Glyph name="springs" className="size-[11px]" />
              <StripSep />
              <Glyph name="gears" className="size-[12px]" />
            </div>
            <span className="mt-[3px] flex h-[6px] w-full items-center justify-end bg-linear-to-r from-[#c9cdd3] to-[#8d949e] pr-px">
              <svg viewBox="0 0 6 5" className="h-[5px] w-[6px]"><path d="M0 0v5l2.500-2.500zM3 0v5l2.500-2.500z" fill="#111" /></svg>
            </span>
          </aside>

          <div className="flex min-w-0 flex-1 flex-col border-l border-[#9aa3b0]">
            <div className="flex h-[16px] shrink-0 items-stretch border-b border-[#8f9aa9] bg-linear-to-b from-[#eef1f4] to-white">
              <svg viewBox="0 0 16 15" preserveAspectRatio="none" className="h-[15px] w-[16px] shrink-0">
                <path d="M0 15L12 2Q13 .5 16 .5V15z" fill="#d6e2f4" />
                <path d="M0 15L12 2Q13 .5 16 .5" fill="none" stroke="#8f9aa9" />
              </svg>
              <div className="flex items-center border-t border-r border-[#8f9aa9] bg-linear-to-b from-[#e8effa] to-[#c8d7ee] pr-[4px] pl-[2px]">
                <Glyph name="tabDoc" className="size-[11px]" />
                <span className="pl-[6px] text-[8px] font-semibold">Сборка БЕЗ ИМЕНИ1</span>
                <button type="button" aria-label="Закрыть вкладку" className="pl-[6px]">
                  <svg viewBox="0 0 6 6" className="size-[6px]"><path d="M.7.7l4.600 4.600M5.300.7.7 5.300" stroke="#222" strokeWidth="1.200" /></svg>
                </button>
              </div>
              <span className="flex-1" />
              <button type="button" aria-label="Окна" className="pr-[3px]">
                <svg viewBox="0 0 7 4" className="h-[4px] w-[7px]"><path d="M0 0h7L3.500 4z" fill="#111" /></svg>
              </button>
            </div>

            <div className="flex min-h-0 flex-1">
              <section className="flex w-[138px] shrink-0 flex-col px-[3px] pt-px">
                <div className="flex h-[12px] shrink-0 items-center bg-[#c3cfdf] pr-[3px] pl-px text-[#4b5a70]">
                  <span className="flex-1 leading-[12px]">Дерево модели</span>
                  <svg viewBox="0 0 6 7" className="mr-[5px] h-[7px] w-[6px]"><path d="M1.500.5h3v3.500h-3zM.5 4h5M3 4v3" fill="none" stroke="#111" /></svg>
                  <svg viewBox="0 0 6 6" className="size-[6px]"><path d="M.7.7l4.600 4.600M5.300.7.7 5.300" stroke="#111" strokeWidth="1.300" /></svg>
                </div>
                <div className="flex h-[17px] shrink-0 items-center bg-linear-to-b from-white to-[#e9ecf0]">
                  <Tool name="treeView" active />
                  <Tool name="bullets" />
                  <Drop />
                  <Sep />
                  <Tool name="docBlue" />
                  <Tool name="docGreen" />
                </div>
                <div className="mt-[3px] flex min-h-0 flex-1 flex-col border border-[#98a1ad] bg-white">
                  <div className="grid h-[82px] shrink-0 auto-rows-fr overflow-hidden pl-[4px] text-[8px] whitespace-nowrap">
                    <div className="flex items-center gap-[4px]">
                      <Glyph name="assemblyRed" className="size-[12px]" />
                      <span>(-) Сборка (Тел-0, Сборочны</span>
                    </div>
                    {tree.map((t) => (
                      <div key={t.text} className={`flex items-center ${t.depth ? "pl-[19px]" : "pl-[4px]"}`}>
                        <span className="flex size-[7px] items-center justify-center border border-[#a0a8b2] bg-white text-[7px] leading-none text-[#334a80]">{t.mark}</span>
                        <span className="w-[5px] border-t border-dotted border-[#8a8f96]" />
                        <Glyph name={t.icon} className="size-[12px]" />
                        <span className={`ml-[3px] px-px leading-[12px] ${t.lit ? "bg-[#efefef]" : ""}`}>{t.text}</span>
                      </div>
                    ))}
                  </div>
                  <span className="flex-1" />
                  <div className="flex h-[11px] shrink-0 items-center bg-[#f1f2f4] px-[4px]">
                    <svg viewBox="0 0 3 5" className="h-[5px] w-[3px]"><path d="M3 0v5L0 2.500z" fill="#222" /></svg>
                    <span className="ml-[5px] flex h-[10px] w-[54px] items-center justify-center gap-px rounded-[1px] border border-[#989ea6] bg-linear-to-b from-[#f4f5f6] to-[#cdd1d6]">
                      <span className="h-[4px] w-px bg-[#555]" />
                      <span className="h-[4px] w-px bg-[#555]" />
                      <span className="h-[4px] w-px bg-[#555]" />
                    </span>
                    <span className="flex-1" />
                    <svg viewBox="0 0 3 5" className="h-[5px] w-[3px]"><path d="M0 0v5l3-2.500z" fill="#222" /></svg>
                  </div>
                </div>
                <div className="flex h-[14px] shrink-0 items-start gap-[5px] leading-[13px]">
                  <button type="button" className="rounded-b-[2px] border border-t-0 border-[#a9b0ba] bg-white px-[2px]">Построение</button>
                  <button type="button">Исполнения</button>
                  <button type="button" className="pl-[4px]">Зоны</button>
                </div>
              </section>
              <main className="min-w-0 flex-1 border border-t-[#7d8793] border-r-[#c8cdd3] border-b-[#b0b6be] border-l-[#7d8793] bg-white pr-[2px]">
                <Scene />
              </main>
            </div>
          </div>
        </div>

        <form className="mt-[2px] flex h-[45px] shrink-0 items-start pl-[19px]">
          <div className="mt-[3px] h-[38px] border-l border-dotted border-[#8a9099]" />
          <div className="grid grid-cols-2 gap-x-[2px] gap-y-[2px] pt-[6px] pr-[2px] pl-[3px]">
            <Glyph name="enter" className="size-[12px]" />
            <Glyph name="stop" />
            <Glyph name="ask" className="size-[12px]" />
          </div>
          <div className="min-w-0 flex-1 pt-[4px] pr-[4px]">
            <div className="flex h-[23px] items-center gap-px border border-[#b0b6be] border-b-[#8f969f] bg-linear-to-b from-white via-white to-[#dfe4ea] pl-[13px] whitespace-nowrap">
              <button type="button" className="h-[13px] w-[47px] border border-[#b5bac1] bg-[#f5f6f7] leading-[11px]">Совпадение</button>
              <Tool name="slab" framed />
              <input aria-label="Первый компонент" readOnly value="Деталь.Операция" className="h-[13px] w-[64px] border border-[#b5bac1] bg-[#f5f6f7] px-px leading-[11px] font-medium" />
              <div className="flex">
                <Tool name="flip" active tight />
                <Tool name="flip2" tight framed />
                <Sep />
              </div>
              <button type="button" className="h-[13px] w-[42px] border border-[#b5bac1] bg-[#f5f6f7] leading-[11px]">Соосность</button>
              <Tool name="cylinder" active />
              <input aria-label="Второй компонент" readOnly value="Деталь.Вырезать" className="h-[13px] w-[64px] border border-[#b5bac1] bg-[#f5f6f7] px-px leading-[11px] font-medium" />
              <div className="flex">
                <Tool name="flipGray" tight framed />
                <Tool name="flip2Gray" tight framed />
                <Sep />
              </div>
              <label className="flex w-[130px] items-center gap-[2px]">
                <input type="checkbox" defaultChecked className="peer sr-only" />
                <svg viewBox="0 0 9 9" className="size-[9px] shrink-0 border border-[#6d7580] bg-white"><path d="M1.500 4l2 3L7.500 1.500" fill="none" stroke="#2c3a5c" strokeWidth="1.300" /></svg>
                <span>Создавать объект спецификации</span>
              </label>
              <Combo label="Спецификация" value="По умолчанию" className="w-[97px]" />
            </div>
            <div className="ml-[2px] inline-block border border-t-0 border-[#b0b6be] bg-white px-[3px] leading-[14px]">Винт А.М10х1,25-6gх30 ГОСТ 1491-80</div>
          </div>
        </form>

        <footer className="flex h-[11px] shrink-0 items-start border-t border-[#a8afb8] bg-linear-to-b from-[#dde1e5] to-[#c6cbd1] pl-[3px]">
          <span className="flex-1 leading-[12px]">Выберите цилиндрическую поверхность, ось, прямое ребро или точку привязки детали</span>
          <span className="h-[10px] w-[58px] border-l border-[#9fa6af]" />
        </footer>
      </div>
    </div>
  );
}
